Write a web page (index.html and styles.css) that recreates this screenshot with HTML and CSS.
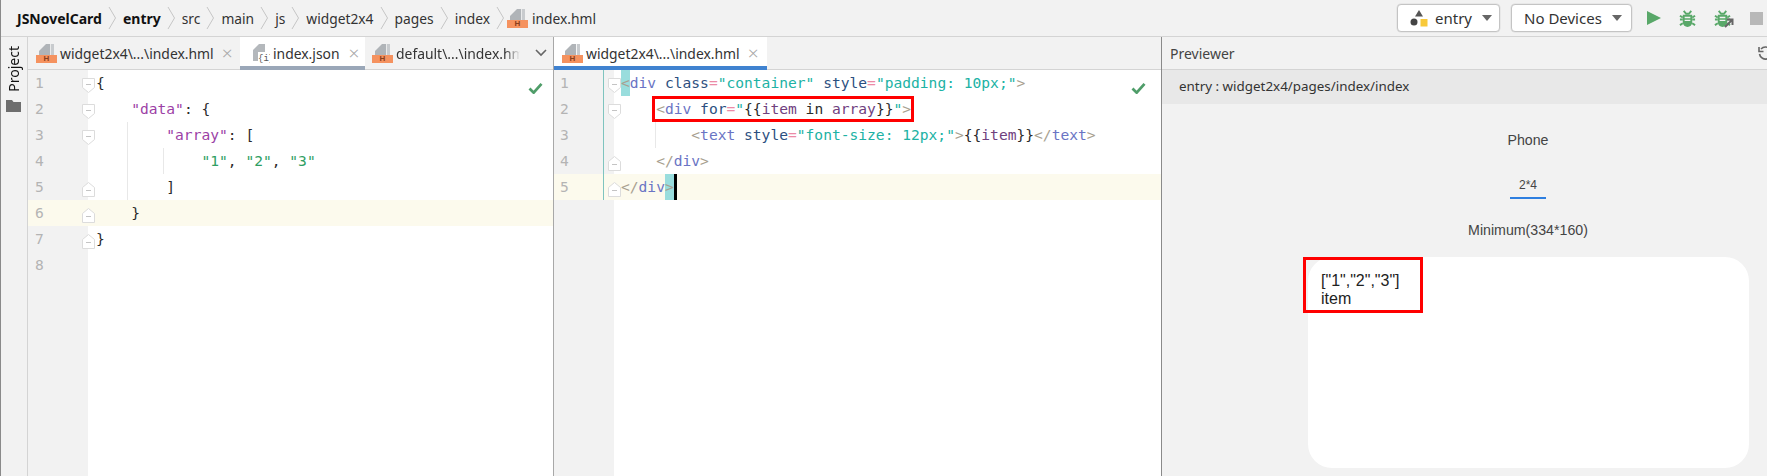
FILE: index.html
```html
<!DOCTYPE html>
<html lang="en">
<head>
<meta charset="utf-8">
<title>JSNovelCard</title>
<link rel="stylesheet" href="styles.css">
</head>
<body>
<svg class="defs" width="0" height="0">
  <defs>
    <symbol id="doc" viewBox="0 0 21 20">
      <path d="M3 12V8L10 1h4v11z" fill="#b0b4b8"/><path d="M14.800 1H18v11h-3.200z" fill="#c8cbce"/>
    </symbol>
    <symbol id="chev" viewBox="0 0 9 24">
      <path d="M1 1l6.500 11L1 23" fill="none" stroke="#c6c6c6" stroke-width="1"/>
    </symbol>
    <symbol id="foldt" viewBox="0 0 13 15">
      <path d="M.5.5h12v9l-6 5-6-5z" fill="#fff" stroke="#dcdcdc"/><path d="M4 6.500h5" stroke="#c4c4c4"/>
    </symbol>
    <symbol id="foldb" viewBox="0 0 13 15">
      <path d="M.5 14.500h12v-9l-6-5-6 5z" fill="#fff" stroke="#dcdcdc"/><path d="M4 8.500h5" stroke="#c4c4c4"/>
    </symbol>
    <symbol id="check" viewBox="0 0 16 13">
      <path d="M1.500 7l4.500 4.500L14.500 2" fill="none" stroke="#4f9d69" stroke-width="3"/>
    </symbol>
    <symbol id="bug" viewBox="0 0 18 18">
      <path d="M5 1l2.500 3h3L13 1M1 6l3 2M17 6l-3 2M1 10h3M17 10h-3M1 16l3-2M17 16l-3-2" fill="none" stroke="#59a869" stroke-width="2"/>
      <path d="M4 5h10v8a5 5 0 0 1-10 0z" fill="#59a869"/>
      <path d="M6 8h6M6 11h6" stroke="#f2f2f2" stroke-width="1.500"/>
    </symbol>
  </defs>
</svg>

<header class="topbar">
  <nav class="crumbs">
    <span class="crumb strong">JSNovelCard</span><svg class="chev"><use href="#chev"/></svg>
    <span class="crumb strong">entry</span><svg class="chev"><use href="#chev"/></svg>
    <span class="crumb">src</span><svg class="chev"><use href="#chev"/></svg>
    <span class="crumb">main</span><svg class="chev"><use href="#chev"/></svg>
    <span class="crumb">js</span><svg class="chev"><use href="#chev"/></svg>
    <span class="crumb">widget2x4</span><svg class="chev"><use href="#chev"/></svg>
    <span class="crumb">pages</span><svg class="chev"><use href="#chev"/></svg>
    <span class="crumb">index</span><svg class="chev chev-last"><use href="#chev"/></svg>
    <span class="file-ic crumb-ic"><svg class="doc"><use href="#doc"/></svg><b class="h">H</b></span>
    <span class="crumb">index.hml</span>
  </nav>
  <div class="tools">
    <div class="select sel-entry">
      <svg class="entry-ic" viewBox="0 0 18 18" width="18" height="18">
        <path d="M9 1l4 6.500H5z" fill="#555"/><circle cx="4" cy="13" r="3.500" fill="#444"/><rect x="10.500" y="10" width="7" height="7.500" fill="#f8c93a"/>
      </svg>
      <span>entry</span><i class="caret"></i>
    </div>
    <div class="select sel-dev"><span>No Devices</span><i class="caret"></i></div>
    <svg class="tool play" viewBox="0 0 14 14" width="14" height="14"><path d="M0 0l14 7-14 7z" fill="#59a869"/></svg>
    <svg class="tool bug1" width="17" height="17"><use href="#bug"/></svg>
    <span class="tool bug2">
      <svg width="17" height="17"><use href="#bug"/></svg>
      <svg class="arrow" viewBox="0 0 10 10" width="10" height="10"><path d="M1 9l7-7M3 1.500h5.500V7" fill="none" stroke="#666" stroke-width="2"/></svg>
    </span>
    <i class="tool stop"></i>
  </div>
</header>

<main class="workspace">
  <aside class="rail">
    <span class="rail-label">Project</span>
    <svg class="folder" viewBox="0 0 15 12" width="15" height="12"><path d="M0 0h6l1.500 2H15v10H0z" fill="#6e6e6e"/></svg>
  </aside>

  <section class="editor left">
    <div class="tabs">
      <div class="tab t1"><span class="file-ic"><svg class="doc"><use href="#doc"/></svg><b class="h">H</b></span><span class="tab-name">widget2x4\...\index.hml</span><span class="x">×</span></div>
      <div class="tab t2 on-gray">
        <svg class="json-ic" viewBox="0 0 18 20" width="18" height="20"><path d="M1 18V7l6-6h6v17z" fill="#b4b8bc"/><rect x="6" y="9" width="12" height="11" fill="#fff"/><text x="6" y="18" class="json-t">{i}</text></svg>
        <span class="tab-name">index.json</span><span class="x">×</span>
      </div>
      <div class="tab t3"><span class="file-ic"><svg class="doc"><use href="#doc"/></svg><b class="h">H</b></span><span class="tab-name clipped">default\...\index.hml</span></div>
      <svg class="more" viewBox="0 0 12 8" width="12" height="8"><path d="M1 1l5 5 5-5" fill="none" stroke="#666" stroke-width="1.600"/></svg>
    </div>
    <div class="code">
      <svg class="ok"><use href="#check"/></svg>
      <div class="row"><span class="gut"><span class="num">1</span><svg class="fold"><use href="#foldt"/></svg></span><code class="ln"><span class="p">{</span></code></div>
      <div class="row"><span class="gut"><span class="num">2</span><svg class="fold"><use href="#foldt"/></svg></span><code class="ln">    <span class="k">"data"</span><span class="p">: {</span></code></div>
      <div class="row"><span class="gut"><span class="num">3</span><svg class="fold"><use href="#foldt"/></svg></span><code class="ln">        <span class="k">"array"</span><span class="p">: [</span></code></div>
      <div class="row"><span class="gut"><span class="num">4</span></span><code class="ln">            <span class="s">"1"</span><span class="p">, </span><span class="s">"2"</span><span class="p">, </span><span class="s">"3"</span></code></div>
      <div class="row"><span class="gut"><span class="num">5</span><svg class="fold"><use href="#foldb"/></svg></span><code class="ln">        <span class="p">]</span></code></div>
      <div class="row cur"><span class="gut"><span class="num">6</span><svg class="fold"><use href="#foldb"/></svg></span><code class="ln">    <span class="p">}</span></code></div>
      <div class="row"><span class="gut"><span class="num">7</span><svg class="fold"><use href="#foldb"/></svg></span><code class="ln"><span class="p">}</span></code></div>
      <div class="row"><span class="gut"><span class="num">8</span></span><code class="ln"></code></div>
      <div class="row fill"><span class="gut"></span></div>
      <i class="guide g1"></i><i class="guide g2"></i>
    </div>
  </section>

  <section class="editor right">
    <div class="tabs">
      <div class="tab t4 on-blue"><span class="file-ic"><svg class="doc"><use href="#doc"/></svg><b class="h">H</b></span><span class="tab-name">widget2x4\...\index.hml</span><span class="x">×</span></div>
    </div>
    <div class="code html">
      <svg class="ok"><use href="#check"/></svg>
      <i class="vcs"></i>
      <div class="row"><span class="gut"><span class="num">1</span><svg class="fold"><use href="#foldt"/></svg></span><code class="ln"><span class="m">&lt;</span><span class="tag">div</span> <span class="at">class</span><span class="eq">=</span><span class="st">"container"</span> <span class="at">style</span><span class="eq">=</span><span class="st">"padding: 10px;"</span><span class="br">&gt;</span></code></div>
      <div class="row"><span class="gut"><span class="num">2</span><svg class="fold"><use href="#foldt"/></svg></span><code class="ln">    <span class="br">&lt;</span><span class="tag">div</span> <span class="at">for</span><span class="eq">=</span><span class="st">"</span><span class="p">{{</span><span class="v">item</span> <span class="p">in</span> <span class="v">array</span><span class="p">}}</span><span class="st">"</span><span class="br">&gt;</span></code></div>
      <div class="row"><span class="gut"><span class="num">3</span></span><code class="ln">        <span class="br">&lt;</span><span class="tag">text</span> <span class="at">style</span><span class="eq">=</span><span class="st">"font-size: 12px;"</span><span class="br">&gt;</span><span class="p">{{</span><span class="v">item</span><span class="p">}}</span><span class="br">&lt;/</span><span class="tag">text</span><span class="br">&gt;</span></code></div>
      <div class="row"><span class="gut"><span class="num">4</span><svg class="fold"><use href="#foldb"/></svg></span><code class="ln">    <span class="br">&lt;/</span><span class="tag">div</span><span class="br">&gt;</span></code></div>
      <div class="row cur"><span class="gut"><span class="num">5</span><svg class="fold"><use href="#foldb"/></svg></span><code class="ln"><span class="br">&lt;/</span><span class="tag">div</span><span class="m">&gt;</span><i class="cursor"></i></code></div>
      <div class="row fill"><span class="gut"></span></div>
      <i class="guide g3"></i>
      <i class="redbox code-box"></i>
    </div>
  </section>

  <section class="preview">
    <div class="pv-title"><span>Previewer</span>
      <svg class="refresh" viewBox="0 0 14 14" width="14" height="14"><path d="M3 3a6 6 0 1 1-1.500 5" fill="none" stroke="#666" stroke-width="1.600"/><path d="M1 1v4.500h4.500" fill="none" stroke="#666" stroke-width="1.600"/></svg>
    </div>
    <div class="pv-path">entry : widget2x4/pages/index/index</div>
    <div class="pv-body">
      <div class="pv-phone">Phone</div>
      <div class="pv-size">2*4</div>
      <div class="pv-min">Minimum(334*160)</div>
      <div class="card">
        <div class="card-text">["1","2","3"]<br>item</div>
        <i class="redbox card-box"></i>
      </div>
    </div>
  </section>
</main>
</body>
</html>
```
FILE: styles.css
```css
* { box-sizing: border-box; }
html, body { margin: 0; padding: 0; }
body {
  width: 1767px; height: 476px; overflow: hidden;
  background: #f2f2f2; color: #222;
  font-family: "Noto Sans", "Open Sans", sans-serif; font-size: 14px;
  display: flex; flex-direction: column;
  border-left: 1px solid #8a8a8a;
}
.defs { position: absolute; }

.topbar {
  height: 37px; flex: none;
  display: flex; align-items: center; justify-content: space-between;
  border-bottom: 1px solid #d4d4d4;
  padding-left: 16px;
}
.crumbs { display: flex; align-items: center; }
.crumb { font-size: 13.8px; color: #333; white-space: nowrap; }
.crumb.strong { font-weight: 700; color: #111; font-size: 14px; }
.chev { width: 9px; height: 24px; margin: 0 6px 0 6px; }
.chev-last { margin-right: 2px; }
.file-ic { position: relative; width: 21px; height: 20px; flex: none; display: block; }
.doc { position: absolute; left: 0; top: 0; width: 21px; height: 20px; }
.h {
  position: absolute; left: 0; top: 12px; width: 21px; height: 8px;
  background: #f5925f; color: #8a3f1c;
  font: 700 8px/8px "Liberation Sans", sans-serif; text-align: center;
}
.crumb-ic { margin-right: 4px; }

.tools { display: flex; align-items: center; padding-right: 4px; }
.select {
  height: 28px; display: flex; align-items: center;
  background: #fff; border: 1px solid #c4c4c4; border-radius: 4px;
  font-size: 15px; color: #333; box-shadow: 0 0 0 .5px #ddd;
}
.sel-entry { width: 103px; padding-left: 12px; margin-right: 11px; }
.sel-entry span { margin-left: 7px; }
.sel-dev { width: 121px; padding-left: 12px; }
.caret {
  width: 0; height: 0; margin-left: 10px;
  border-left: 5px solid transparent; border-right: 5px solid transparent; border-top: 6px solid #666;
}
.tool { display: block; flex: none; }
.play { margin-left: 15px; }
.bug1 { margin-left: 18px; }
.bug2 { margin-left: 18px; position: relative; width: 20px; height: 17px; }
.arrow { position: absolute; right: 0; bottom: -1px; }
.stop { width: 13px; height: 13px; background: #b8b8b8; margin-left: 16px; }

.workspace { flex: 1; display: flex; min-height: 0; }
.rail {
  width: 27px; flex: none; border-right: 1px solid #d4d4d4;
  display: flex; flex-direction: column; align-items: center;
  padding-top: 9px; padding-right: 1px;
}
.rail-label { writing-mode: vertical-rl; transform: rotate(180deg); font-size: 14px; color: #111; line-height: 16px; }
.folder { margin-top: 8px; }

.editor { display: flex; flex-direction: column; flex: none; min-width: 0; }
.editor.left { width: 526px; border-right: 1px solid #a8a8a8; }
.editor.right { width: 608px; border-right: 1px solid #8a8a8a; }

.tabs {
  height: 33px; flex: none; display: flex; align-items: stretch;
  border-bottom: 1px solid #d4d4d4; background: #f2f2f2; position: relative;
}
.tab { display: flex; align-items: center; font-size: 13.9px; color: #333; padding-left: 8px; position: relative; white-space: nowrap; }
.tab-name { margin-left: 3px; }
.x { color: #a8a8a8; font-size: 19px; font-weight: 300; line-height: 1; }
.t1 { width: 212px; }
.t1 .x, .t4 .x { margin-left: 8px; }
.t2 { width: 125px; background: #fff; padding-left: 12px; }
.t2 .x { margin-left: 9px; }
.t3 { width: 158px; overflow: hidden; padding-left: 7px; }
.clipped { width: 124px; overflow: hidden; -webkit-mask-image: linear-gradient(90deg, #000 88%, transparent); mask-image: linear-gradient(90deg, #000 88%, transparent); }
.t4 { width: 213px; background: #fff; }
.on-gray::after, .on-blue::after { content: ""; position: absolute; left: 0; right: 0; bottom: -1px; height: 4px; }
.on-gray::after { background: #9aa7b8; }
.on-blue::after { background: #3f82d0; }
.more { align-self: center; margin-left: 12px; }
.json-t { font: 9px "Liberation Mono", monospace; fill: #555; }

.code { flex: 1; display: flex; flex-direction: column; position: relative; background: #fff; min-height: 0; }
.row { height: 26px; flex: none; display: flex; }
.row.fill { flex: 1; height: auto; }
.gut { width: 60px; flex: none; background: #f2f2f2; position: relative; display: block; }
.num {
  position: absolute; left: 7px; top: 0;
  font: 14.6px/26px "DejaVu Sans Mono", monospace; color: #b4b4b4;
}
.html .num { left: 6px; }
.fold { position: absolute; left: 54px; top: 8px; width: 13px; height: 15px; z-index: 2; }
.ln {
  flex: 1; padding-left: 8px; white-space: pre;
  font: 14.6px/26px "DejaVu Sans Mono", monospace; color: #333;
  position: relative;
}
.html .ln { padding-left: 7px; }
.row.cur .ln, .row.cur .gut { background: #fcfaed; }
.k { color: #9c3fa6; }
.s { color: #2f9e62; }
.p { color: #2b2b2b; }
.m { display: inline-block; height: 26px; background: #99dddd; color: #a89f90; vertical-align: top; }
.br { color: #a89f90; }
.tag { color: #6a74c4; }
.at { color: #2c4f80; }
.eq { color: #ec8aa6; }
.st { color: #20b2a4; }
.v { color: #70407e; }
.cursor { display: inline-block; width: 3px; height: 26px; background: #000; vertical-align: top; }
.ok { position: absolute; right: 10px; top: 12px; width: 15px; height: 12px; z-index: 3; }
.html .ok { right: 15px; }
.guide { position: absolute; width: 1px; background: #e8e8e8; }
.g1 { left: 99px; top: 52px; height: 78px; }
.g2 { left: 135px; top: 78px; height: 26px; }
.g3 { left: 101px; top: 52px; height: 26px; }
.vcs { position: absolute; left: 49px; top: 0; width: 1px; height: 130px; background: #7fc4bf; z-index: 1; }
.redbox { position: absolute; border: 3px solid #f00; display: block; z-index: 4; }
.code-box { left: 98px; top: 26px; width: 262px; height: 26px; }

.preview { flex: 1; display: flex; flex-direction: column; min-width: 0; }
.pv-title {
  height: 33px; flex: none; display: flex; align-items: center; justify-content: space-between;
  padding-left: 8px; font-size: 14px; color: #444;
  border-bottom: 1px solid #d4d4d4; overflow: hidden;
}
.refresh { margin-right: -5px; }
.pv-path { height: 34px; flex: none; background: #e8e8e8; padding-left: 17px; line-height: 33px; font-size: 13.4px; color: #333; }
.pv-body {
  flex: 1; padding: 0 18px 0 145px; text-align: center; color: #444;
  font-family: "Liberation Sans", Arial, sans-serif; font-size: 14.2px;
}
.pv-phone { margin-top: 26px; line-height: 20px; }
.pv-size { width: 36px; margin: 28px auto 0; font-size: 12px; line-height: 14px; height: 21px; border-bottom: 2px solid #2e7fe0; }
.pv-min { margin-top: 21px; line-height: 20px; }
.card { position: relative; background: #fff; height: 211px; margin: 17px 0 0 1px; border-radius: 24px; text-align: left; padding: 15px 13px; }
.card-text { font-size: 16px; line-height: 18px; color: #222; }
.card-box { left: -5px; top: 0; width: 120px; height: 56px; }
```
